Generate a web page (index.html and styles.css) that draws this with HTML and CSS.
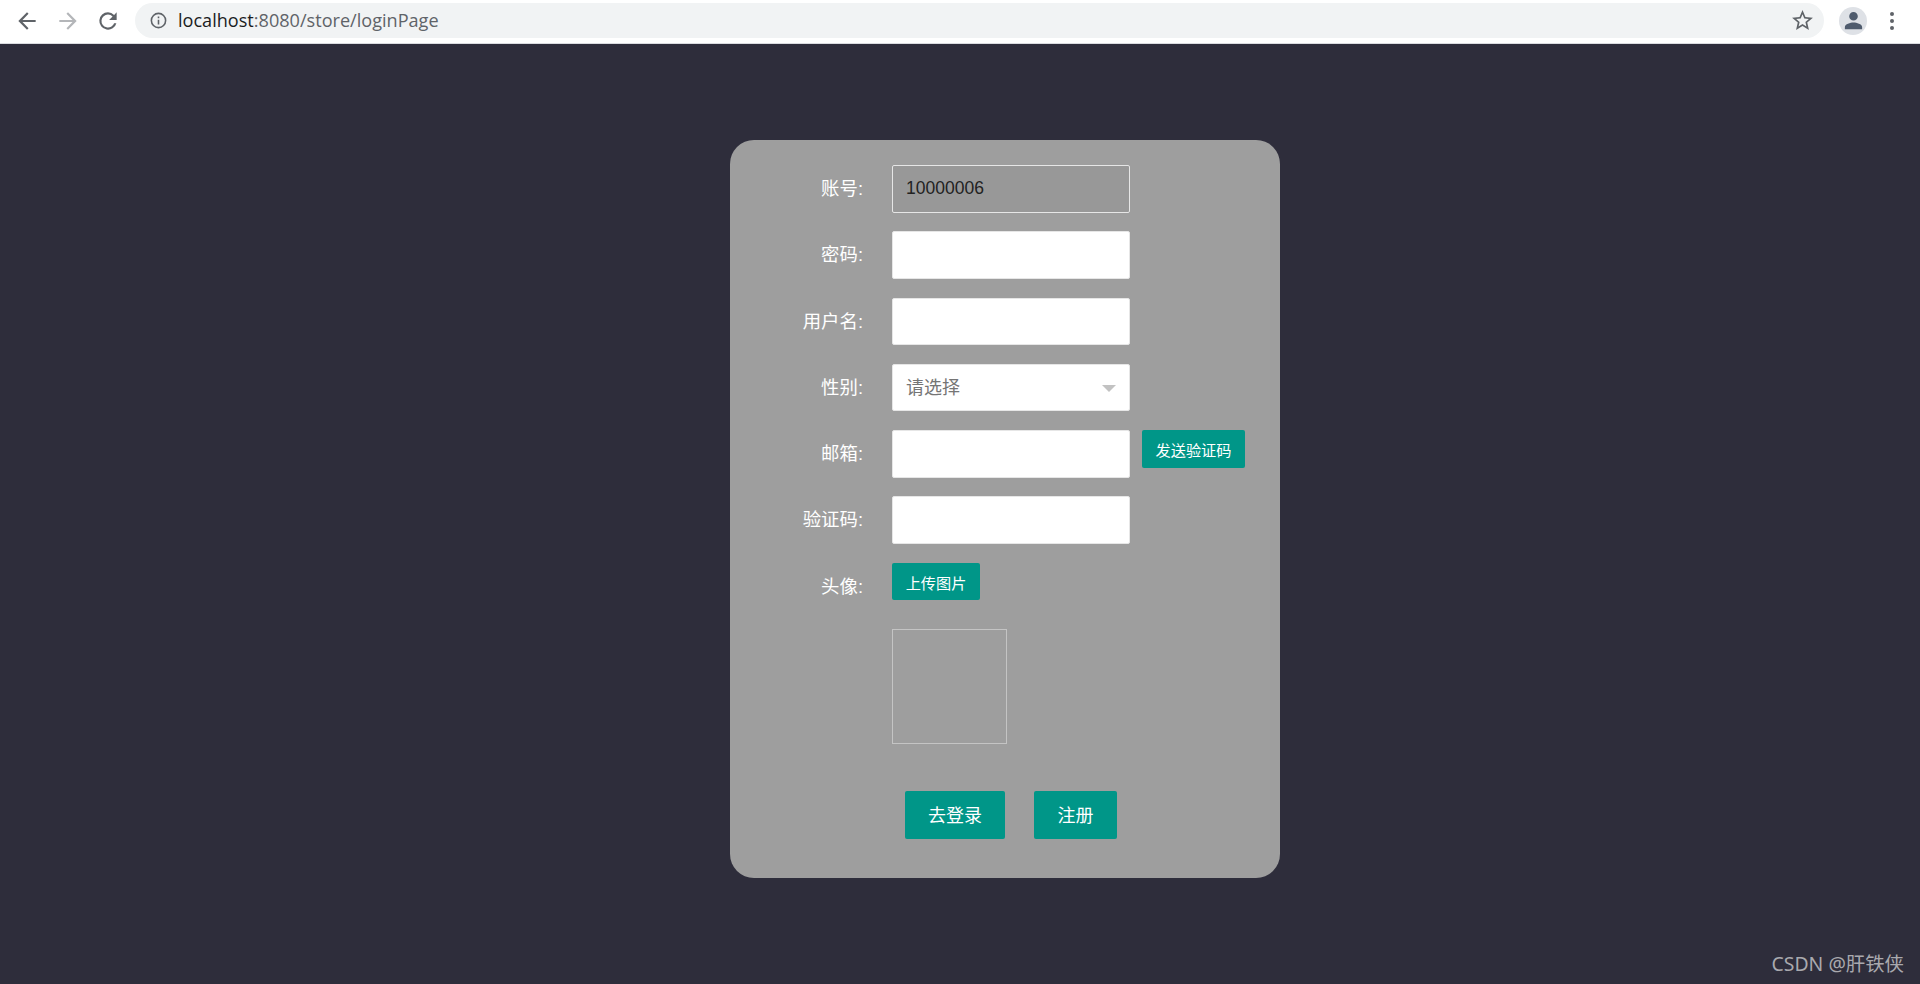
FILE: index.html
```html
<!DOCTYPE html>
<html lang="zh">
<head>
<meta charset="utf-8">
<title>loginPage</title>
<link rel="stylesheet" href="styles.css">
</head>
<body>
<div class="browser-bar">
  <div class="nav-buttons">
    <svg class="nav-icon" viewBox="0 0 24 24"><path fill="#5f6368" d="M20 11H7.83l5.59-5.59L12 4l-8 8 8 8 1.41-1.41L7.83 13H20v-2z"/></svg>
    <svg class="nav-icon" viewBox="0 0 24 24"><path fill="#b4b6b9" d="M4 11h12.17l-5.59-5.59L12 4l8 8-8 8-1.41-1.41L16.17 13H4v-2z"/></svg>
    <svg class="nav-icon" viewBox="0 0 24 24"><path fill="#5f6368" d="M17.65 6.35A7.96 7.96 0 0 0 12 4a8 8 0 1 0 7.73 10h-2.08A6 6 0 1 1 12 6c1.66 0 3.14.69 4.22 1.78L13 11h7V4l-2.35 2.35z"/></svg>
  </div>
  <div class="omnibox">
    <svg class="info-icon" viewBox="0 0 24 24"><path fill="#5f6368" d="M11 7h2v2h-2zm0 4h2v6h-2zm1-9a10 10 0 1 0 0 20 10 10 0 0 0 0-20zm0 18a8 8 0 1 1 0-16 8 8 0 0 1 0 16z"/></svg>
    <span class="url"><span class="url-host">localhost</span>:8080/store/loginPage</span>
    <svg class="star-icon" viewBox="0 0 24 24"><path fill="#5f6368" d="M22 9.24l-7.19-.62L12 2 9.19 8.63 2 9.24l5.46 4.73L5.82 21 12 17.27 18.18 21l-1.63-7.03L22 9.24zM12 15.4l-3.76 2.27 1-4.28-3.32-2.88 4.38-.38L12 6.1l1.71 4.04 4.38.38-3.32 2.88 1 4.28L12 15.4z"/></svg>
  </div>
  <div class="avatar">
    <svg class="avatar-icon" viewBox="0 0 24 24"><path fill="#4f5b6d" d="M12 12a4.500 4.500 0 1 0 0-9 4.500 4.500 0 0 0 0 9zm0 2c-3.300 0-9 1.600-9 4.800V21h18v-2.200c0-3.200-5.700-4.800-9-4.800z"/></svg>
  </div>
  <div class="kebab"><i></i><i></i><i></i></div>
</div>

<main class="stage">
  <form class="card">
    <div class="row">
      <label class="label">账号:</label>
      <div class="input input-readonly">10000006</div>
    </div>
    <div class="row">
      <label class="label">密码:</label>
      <div class="input"></div>
    </div>
    <div class="row">
      <label class="label">用户名:</label>
      <div class="input"></div>
    </div>
    <div class="row">
      <label class="label">性别:</label>
      <div class="input select">
        <span>请选择</span>
        <span class="caret"></span>
      </div>
    </div>
    <div class="row">
      <label class="label">邮箱:</label>
      <div class="input"></div>
      <button type="button" class="btn btn-small btn-send">发送验证码</button>
    </div>
    <div class="row">
      <label class="label">验证码:</label>
      <div class="input"></div>
    </div>
    <div class="row">
      <label class="label">头像:</label>
      <button type="button" class="btn btn-small btn-upload">上传图片</button>
    </div>
    <div class="row">
      <span class="label"></span>
      <div class="preview"></div>
    </div>
    <div class="actions">
      <button type="button" class="btn btn-large btn-login">去登录</button>
      <button type="button" class="btn btn-large btn-register">注册</button>
    </div>
  </form>
</main>
<div class="watermark">CSDN @肝铁侠</div>
</body>
</html>
```
FILE: styles.css
```css
html, body {
  margin: 0;
  padding: 0;
  height: 100%;
}
body {
  display: flex;
  flex-direction: column;
  height: 984px;
  overflow: hidden;
  background: #2e2d3b;
  font-family: "Liberation Sans", "Noto Sans CJK SC", sans-serif;
}
.browser-bar {
  flex: none;
  display: flex;
  align-items: center;
  height: 41px;
  padding-bottom: 2px;
  background: #fff;
  border-bottom: 1px solid #dadce0;
  box-sizing: content-box;
}
.nav-buttons {
  display: flex;
  gap: 14.5px;
  padding-left: 14px;
  width: 135px;
  box-sizing: border-box;
}
.nav-icon {
  width: 26px;
  height: 26px;
}
.omnibox {
  display: flex;
  align-items: center;
  width: 1689px;
  height: 35px;
  border-radius: 18px;
  background: #f1f3f4;
  box-sizing: border-box;
  padding-left: 14px;
  padding-right: 9px;
}
.info-icon {
  width: 19px;
  height: 19px;
  flex: none;
}
.url {
  margin-left: 10px;
  padding-bottom: 1px;
  font-family: "Open Sans", "Liberation Sans", sans-serif;
  font-size: 18.1px;
  color: #5f6368;
  flex: 1;
}
.url-host {
  color: #1b1c1e;
}
.star-icon {
  width: 25px;
  height: 25px;
  flex: none;
}
.avatar {
  flex: none;
  margin-left: 15px;
  width: 28px;
  height: 28px;
  border-radius: 50%;
  background: #dee1e6;
  display: flex;
  align-items: center;
  justify-content: center;
}
.avatar-icon {
  width: 23px;
  height: 23px;
}
.kebab {
  flex: none;
  margin-left: 23px;
  display: flex;
  flex-direction: column;
  gap: 3px;
}
.kebab i {
  display: block;
  width: 4px;
  height: 4px;
  border-radius: 50%;
  background: #5f6368;
}
.stage {
  flex: 1;
  padding: 96px 0 0 730px;
}
.card {
  box-sizing: border-box;
  width: 550px;
  height: 738px;
  background: #9e9e9e;
  border-radius: 24px;
  padding-top: 25px;
  display: flex;
  flex-direction: column;
  gap: 18.8px;
}
.row {
  display: flex;
  align-items: flex-start;
}
.label {
  flex: none;
  width: 133px;
  margin-right: 29px;
  height: 47.5px;
  line-height: 48.5px;
  text-align: right;
  font-size: 18.4px;
  color: #fff;
}
.input {
  flex: none;
  box-sizing: border-box;
  width: 238px;
  height: 47.5px;
  padding-left: 13px;
  line-height: 45px;
  font-size: 17.5px;
  background: #fff;
  border: 1px solid #e6e6e6;
  border-radius: 2px;
  color: #222;
}
.input-readonly {
  background: #989898;
  border-color: #e6e6e6;
}
.select {
  display: flex;
  align-items: center;
  justify-content: space-between;
  padding-top: 1px;
  padding-right: 13px;
  font-size: 18px;
  color: #757575;
}
.caret {
  width: 0;
  height: 0;
  border-style: solid;
  border-width: 7px 7.5px 0;
  border-color: #c2c2c2 transparent transparent;
}
.btn {
  box-sizing: border-box;
  border: 0;
  padding: 0;
  border-radius: 2px;
  background: #009688;
  color: #fff;
  font-family: inherit;
}
.btn-small {
  height: 37.5px;
  font-size: 15.2px;
}
.btn-send {
  width: 103px;
  margin-left: 12px;
}
.btn-upload {
  width: 88px;
}
.preview {
  box-sizing: border-box;
  width: 115px;
  height: 115px;
  border: 1px solid #c4c4c4;
}
.actions {
  display: flex;
  gap: 29px;
  padding-left: 175px;
  margin-top: 28px;
}
.btn-large {
  height: 48px;
  padding-bottom: 2px;
  font-size: 18px;
}
.btn-login {
  width: 100px;
}
.btn-register {
  width: 83px;
}
.watermark {
  position: absolute;
  right: 16px;
  bottom: 7px;
  font-family: "Noto Sans", "Noto Sans CJK SC", sans-serif;
  font-size: 19.4px;
  color: #a9a9ae;
}
```
